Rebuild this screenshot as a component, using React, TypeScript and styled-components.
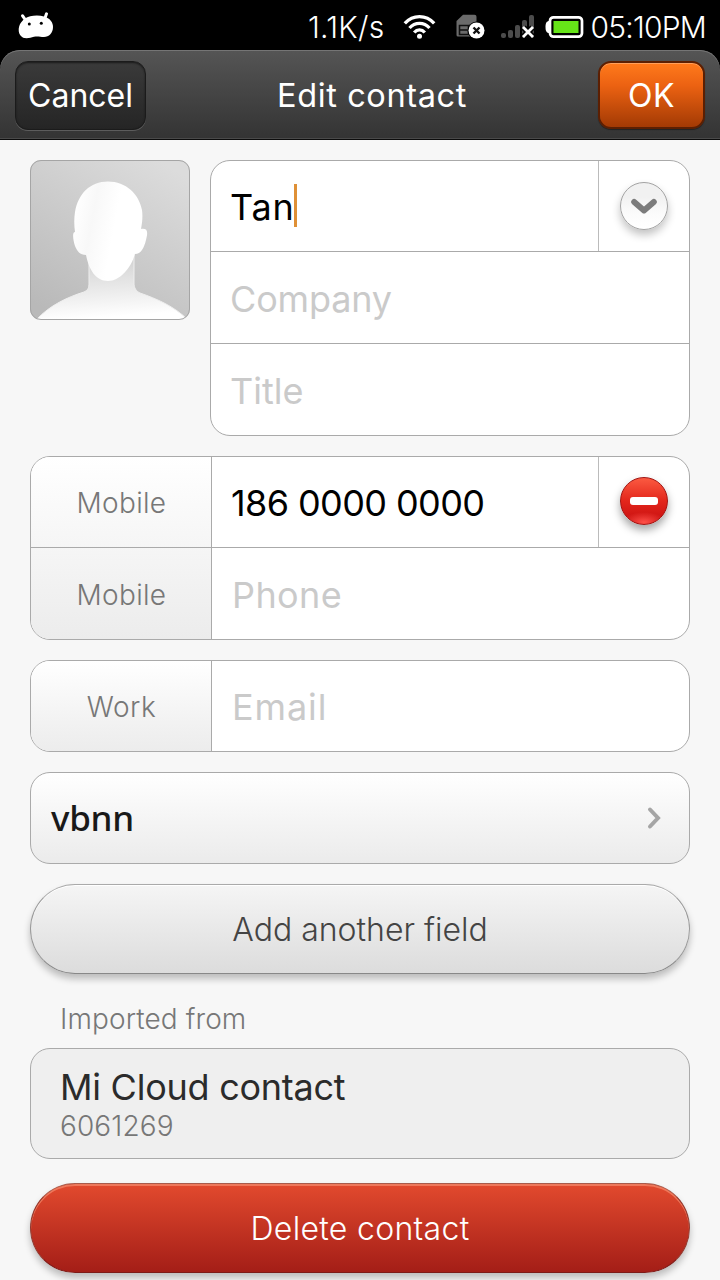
import React from 'react';
import styled, { createGlobalStyle } from 'styled-components';

const Global = createGlobalStyle`
  * { box-sizing: border-box; }
  html, body { margin: 0; padding: 0; background: #000; }
  body { width: 720px; height: 1280px; overflow: hidden; font-family: Inter, "Liberation Sans", sans-serif; }
  button { font-family: inherit; padding: 0; margin: 0; border: 0; background: none; }
`;

const Screen = styled.div`
  width: 720px;
  height: 1280px;
  overflow: hidden;
  display: flex;
  flex-direction: column;
  background: #000;
`;

const StatusBar = styled.header`
  height: 50px;
  flex: none;
  display: flex;
  align-items: center;
  padding: 3px 14px 0 18px;
  color: #fff;
`;

const StatusIcons = styled.div`
  display: flex;
  align-items: center;
  margin-left: auto;
  margin-right: 7px;
`;

const Text = styled.span<{ $size: number; $weight?: number; $spacing?: number; $color?: string; $line?: number }>`
  display: block;
  white-space: pre;
  font-size: ${(p) => p.$size}px;
  font-weight: ${(p) => p.$weight ?? 400};
  letter-spacing: ${(p) => p.$spacing ?? 0}px;
  color: ${(p) => p.$color ?? 'inherit'};
  line-height: ${(p) => p.$line ?? 44}px;
`;

const AddressText = styled(Text)`
  font-family: "Noto Sans", Inter, sans-serif;
`;

const Icon = styled.svg<{ $left?: number }>`
  display: block;
  flex: none;
  margin-left: ${(p) => p.$left ?? 0}px;
`;

const TitleBar = styled.div`
  height: 90px;
  flex: none;
  display: grid;
  grid-template-columns: 131px 1fr 107px;
  align-items: start;
  padding: 10px 15px 0;
  color: #fff;
  border-radius: 20px 20px 0 0;
  background: linear-gradient(#555 0%, #333 100%);
  box-shadow: inset 0 1px 0 #757575, inset 0 -1px 0 #0c0c0c, inset 0 -2px 0 #4a4a4a;
`;

const PageTitle = styled.h1`
  margin: 0;
  padding-top: 14px;
  display: flex;
  justify-content: center;
`;

const CancelButton = styled.button`
  height: 69px;
  margin-top: 1px;
  display: flex;
  justify-content: center;
  padding-top: 12px;
  color: #fff;
  border: 1px solid #1b1b1b;
  border-radius: 13px;
  background: linear-gradient(#3a3a3a, #252525);
  box-shadow: inset 0 1px 2px #1a1a1a, 0 1px 0 #5c5c5c;
`;

const OkButton = styled.button`
  height: 68px;
  margin-top: 1px;
  display: flex;
  justify-content: center;
  padding-top: 11px;
  color: #fff;
  border: 2px solid #5c1f02;
  border-radius: 13px;
  background: linear-gradient(#ff7a1c, #ec6212 35%, #a33a04);
  box-shadow: inset 0 1px 0 #ffa05c, 0 1px 1px rgba(0, 0, 0, 0.4);
`;

const Content = styled.main`
  flex: 1;
  min-height: 0;
  padding: 20px 30px 0;
  background: #f7f7f7;
  display: flex;
  flex-direction: column;
`;

const Profile = styled.section`
  display: grid;
  grid-template-columns: 160px 480px;
  column-gap: 20px;
  align-items: start;
`;

const Card = styled.section<{ $top?: number }>`
  flex: none;
  margin-top: ${(p) => p.$top ?? 0}px;
  display: flex;
  border: 1px solid #aaa;
  border-radius: 20px;
  overflow: hidden;
  background: #fff;
`;

const Fields = styled.div`
  flex: 1;
  display: flex;
  flex-direction: column;
`;

const Field = styled.div<{ $indent?: number }>`
  height: 90px;
  display: flex;
  padding-left: ${(p) => p.$indent ?? 20}px;
  & + & { border-top: 1px solid #aaa; height: 92px; }
`;

const Labels = styled.div`
  width: 181px;
  flex: none;
  border-right: 1px solid #aaa;
  background: linear-gradient(#fff, #ececec);
`;

const Label = styled.div`
  height: 90px;
  padding-top: 24px;
  padding-left: 1px;
  display: flex;
  justify-content: center;
  & + & { border-top: 1px solid #aaa; height: 92px; padding-top: 25px; }
`;

const Value = styled.div`
  flex: 1;
  display: flex;
  align-items: center;
  padding-top: 2px;
`;

const Caret = styled.i`
  width: 3px;
  height: 43px;
  margin-left: -1px;
  margin-bottom: 3px;
  background: #df9036;
`;

const ActionCell = styled.div<{ $top: number }>`
  width: 91px;
  border-left: 1px solid #bbb;
  display: flex;
  justify-content: center;
  padding-top: ${(p) => p.$top}px;
`;

const RoundButton = styled.button<{ $danger?: boolean }>`
  width: 48px;
  height: 48px;
  border-radius: 50%;
  display: grid;
  place-items: center;
  border: 1px solid ${(p) => (p.$danger ? '#a01412' : '#a2a2a2')};
  background: ${(p) =>
    p.$danger
      ? 'radial-gradient(ellipse 22px 10px at 50% 96%, #ff5048, rgba(255,80,72,0)), linear-gradient(#fb5a41, #e3261b 50%, #c50d0f)'
      : 'linear-gradient(#f1f1f1 30%, #fbfbfb 65%, #fff)'};
  box-shadow: 0 5px 8px rgba(0, 0, 0, ${(p) => (p.$danger ? 0.36 : 0.24)});
`;

const LinkRow = styled.button`
  height: 92px;
  margin-top: 20px;
  flex: none;
  display: flex;
  justify-content: space-between;
  align-items: center;
  padding: 0 27px 0 20px;
  border: 1px solid #aaa;
  border-radius: 20px;
  background: linear-gradient(#fff, #ebebeb);
`;

const PillButton = styled.button<{ $danger?: boolean; $top: number }>`
  height: 90px;
  flex: none;
  margin-top: ${(p) => p.$top}px;
  display: flex;
  justify-content: center;
  padding-top: 23px;
  border-radius: 45px;
  border: 1px solid ${(p) => (p.$danger ? '#913a30' : '#999')};
  border-top-color: ${(p) => (p.$danger ? '#a85b4b' : '#aaa')};
  border-bottom-color: ${(p) => (p.$danger ? '#7d1b18' : '#888')};
  color: ${(p) => (p.$danger ? '#fff' : '#444')};
  background: ${(p) => (p.$danger ? 'linear-gradient(#e24a2e, #a41e17)' : 'linear-gradient(#f5f5f5, #dcdcdc)')};
  box-shadow: inset 0 ${(p) => (p.$danger ? '2px 0 #ee785b' : '1px 0 #fff')}, 0 5px 7px rgba(0, 0, 0, 0.24);
`;

const SectionLabel = styled.div`
  height: 74px;
  flex: none;
  padding: 23px 30px 0;
`;

const SourceCard = styled.section`
  height: 111px;
  flex: none;
  border: 1px solid #aaa;
  border-radius: 20px;
  background: #efefef;
  padding: 16px 29px 0;
`;

const Droid = () => (
  <Icon width="36" height="30" viewBox="0 0 36 30">
    <path
      d="M.7 18C.7 13 3.500 9 7 6.500 11 3.500 20 2.500 26 4.500c6 1.500 9 6 9 10.500 0 6-4 10-9 10-4 0-6-1-10-.2-3 .7-4 1.500-7.500 1.500C3.500 26.300.7 22.500.7 18z"
      fill="#fff"
    />
    <path d="M4.600 3.800 7.500 8M28.500 1.800 27 6" stroke="#fff" strokeWidth="3" strokeLinecap="round" />
    <circle cx="11.300" cy="12" r="1.500" />
    <circle cx="23.300" cy="11.200" r="1.500" />
  </Icon>
);

const Wifi = () => (
  <Icon $left={18} width="33" height="26" viewBox="0 0 33 26">
    <g fill="none" stroke="#fff" strokeWidth="3.300">
      <path d="M1.800 9.300C10 .300 23 .300 31.200 9.300" />
      <path d="M6.500 14C12 7.800 21 7.800 26.500 14" />
      <path d="M11.200 18.500c3-3.400 7.600-3.400 10.600 0" />
    </g>
    <circle cx="16.500" cy="22.300" r="2.500" fill="#fff" />
  </Icon>
);

const SimCard = () => (
  <Icon $left={20} width="30" height="26" viewBox="0 0 30 26">
    <path d="M7 .700h11.500q2 0 2 2V22.500H2q-1.500 0-1.500-1.500V7z" fill="#6b6b6b" />
    <path d="M3.500 11.500h9v9h-9zM3.500 16h8" fill="none" stroke="#111" strokeWidth="1.600" />
    <circle cx="20.500" cy="16.500" r="9" />
    <circle cx="20.500" cy="16.500" r="8" fill="#fff" />
    <path d="m17.500 13.500 6 6m0-6-6 6" stroke="#111" strokeWidth="2.400" />
  </Icon>
);

const Signal = () => (
  <Icon $left={14} width="35" height="26" viewBox="0 0 35 26">
    <g fill="#4c4c4c">
      <rect x="1" y="19" width="5" height="5" rx="2" />
      <rect x="8" y="16" width="5" height="8" rx="2" />
      <rect x="15" y="11" width="5" height="13" rx="2" />
      <rect x="22" y="6" width="5" height="18" rx="2" />
      <rect x="29" y="1" width="5" height="23" rx="2" />
    </g>
    <path d="m23.500 13.500 9 9m0-9-9 9" stroke="#000" strokeWidth="6" />
    <path d="m23 13 10 10m0-10L23 23" stroke="#fff" strokeWidth="2.800" />
  </Icon>
);

const Battery = () => (
  <Icon $left={10} width="39" height="24" viewBox="0 0 39 24">
    <path d="M4.500 6C1.500 6 .500 8 .500 12s1 6 4 6z" fill="#fff" />
    <rect x="5" y="2.300" width="32" height="19.400" rx="3.500" fill="#000" stroke="#fff" strokeWidth="2.700" />
    <rect x="8.500" y="6" width="25" height="12" fill="#66e418" />
  </Icon>
);

const Avatar = () => (
  <Icon width="160" height="160" viewBox="0 0 160 160">
    <defs>
      <linearGradient id="photo" x1="0.200" y1="1" x2="0.800" y2="0">
        <stop offset="0" stopColor="#b9b9b9" />
        <stop offset="1" stopColor="#dcdcdc" />
      </linearGradient>
      <linearGradient id="body" x1="0" y1="0" x2="0.150" y2="1">
        <stop offset="0" stopColor="#c9c9c9" />
        <stop offset="0.350" stopColor="#dedede" />
        <stop offset="1" stopColor="#fff" />
      </linearGradient>
      <linearGradient id="face" x1="0" y1="0.350" x2="1" y2="0.600">
        <stop offset="0" stopColor="#fff" />
        <stop offset="0.250" stopColor="#f8f8f8" />
        <stop offset="0.550" stopColor="#fff" />
      </linearGradient>
      <clipPath id="frame"><rect width="160" height="160" rx="11" /></clipPath>
    </defs>
    <g clipPath="url(#frame)">
      <rect width="160" height="160" fill="url(#photo)" />
      <path d="M6 160c14-15 32-23 48-28 4-2 5-4 5-9V95h45v28c0 5 2 8 6 10 17 6 34 13 48 27z" fill="url(#body)" stroke="#eee" strokeWidth="1" />
      <path
        d="M45 72C44 65 44 58 45 52 48 34 60 21.500 78 21.500S109 34 112 50C113 57 112 64 111 69 118 68 118 72 116 80 114 88 111 94 105 94 101 108 90 121 78 121 66 121 59 110 56 95 50 95 47 91 45 86 43 80 42 72 45 72z"
        fill="url(#face)"
      />
    </g>
    <rect x=".500" y=".500" width="159" height="159" rx="10.500" fill="none" stroke="#a5a5a5" />
  </Icon>
);

export default function App() {
  return (
    <Screen>
      <Global />
      <StatusBar>
        <Droid />
        <StatusIcons>
          <Text $size={30} $weight={300} $spacing={0.3}>1.1K/s</Text>
          <Wifi />
          <SimCard />
          <Signal />
          <Battery />
        </StatusIcons>
        <Text as="time" $size={30} $weight={300} $spacing={-0.8}>05:10PM</Text>
      </StatusBar>
      <TitleBar>
        <CancelButton><Text $size={32}>Cancel</Text></CancelButton>
        <PageTitle><Text $size={32.5} $spacing={0.6}>Edit contact</Text></PageTitle>
        <OkButton><Text $size={32} $spacing={0.5}>OK</Text></OkButton>
      </TitleBar>
      <Content>
        <Profile>
          <Avatar />
          <Card>
            <Fields>
              <Field $indent={19}>
                <Value><Text $size={36} $spacing={0.8} $color="#000">Tan</Text><Caret /></Value>
                <ActionCell $top={21}>
                  <RoundButton aria-label="More name fields">
                    <Icon width="28" height="18" viewBox="0 0 28 18">
                      <path d="m4.200 5 9.800 8.500L23.800 5" fill="none" stroke="#7c7c7c" strokeWidth="6" strokeLinecap="round" strokeLinejoin="round" />
                    </Icon>
                  </RoundButton>
                </ActionCell>
              </Field>
              <Field $indent={19}><Value><Text $size={36} $spacing={-0.15} $color="#cacaca">Company</Text></Value></Field>
              <Field $indent={19}><Value><Text $size={36} $color="#cacaca">Title</Text></Value></Field>
            </Fields>
          </Card>
        </Profile>
        <Card $top={20}>
          <Labels>
            <Label><Text $size={28} $weight={300} $spacing={0.3} $color="#777">Mobile</Text></Label>
            <Label><Text $size={28} $weight={300} $spacing={0.3} $color="#777">Mobile</Text></Label>
          </Labels>
          <Fields>
            <Field $indent={19}>
              <Value><Text $size={36} $spacing={-0.6} $color="#000">186 0000 0000</Text></Value>
              <ActionCell $top={20}>
                <RoundButton $danger aria-label="Remove number">
                  <Icon width="28" height="8" viewBox="0 0 28 8"><rect width="28" height="8" rx="3" fill="#fff" /></Icon>
                </RoundButton>
              </ActionCell>
            </Field>
            <Field><Value><Text $size={36} $spacing={0.4} $color="#cacaca">Phone</Text></Value></Field>
          </Fields>
        </Card>
        <Card $top={20}>
          <Labels><Label><Text $size={28} $weight={300} $spacing={0.5} $color="#777">Work</Text></Label></Labels>
          <Fields><Field><Value><Text $size={36} $spacing={0.9} $color="#cacaca">Email</Text></Value></Field></Fields>
        </Card>
        <LinkRow>
          <AddressText $size={35} $weight={500} $spacing={-0.3} $color="#191919">vbnn</AddressText>
          <Icon width="16" height="24" viewBox="0 0 16 24">
            <path d="m4 3.500 8 8.500-8 8.500" fill="none" stroke="#a5a5a5" strokeWidth="4" strokeLinecap="round" />
          </Icon>
        </LinkRow>
        <PillButton $top={20}><Text $size={32} $weight={300}>Add another field</Text></PillButton>
        <SectionLabel><Text $size={28} $weight={300} $spacing={0.1} $color="#777">Imported from</Text></SectionLabel>
        <SourceCard>
          <Text $size={36} $spacing={-0.25} $color="#2b2b2b">Mi Cloud contact</Text>
          <Text $size={28} $weight={300} $spacing={0.1} $color="#777" $line={34}>6061269</Text>
        </SourceCard>
        <PillButton $danger $top={24}><Text $size={32} $weight={300} $spacing={0.3}>Delete contact</Text></PillButton>
      </Content>
    </Screen>
  );
}
